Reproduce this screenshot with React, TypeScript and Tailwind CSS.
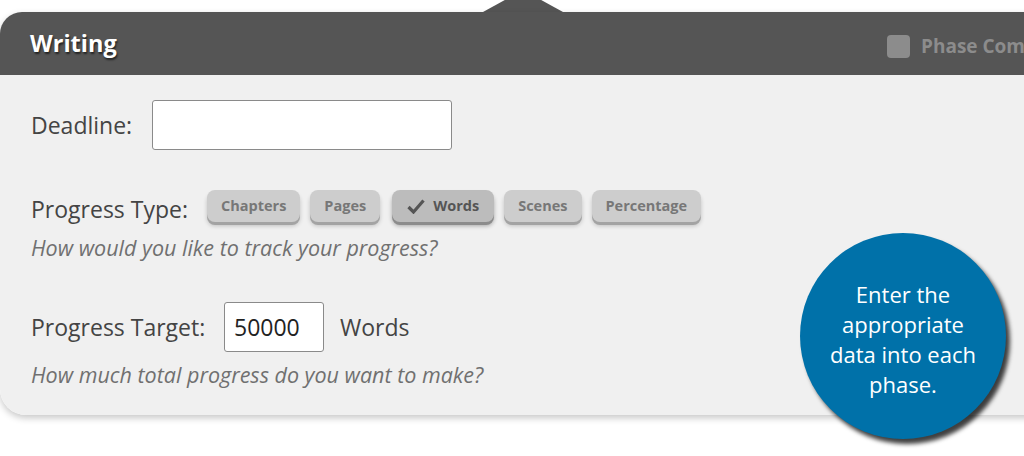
import React from "react";

const btns = ["Chapters", "Pages", "Words", "Scenes", "Percentage"];

export default function App() {
  return (
    <div className="relative w-[1024px] h-[456px] bg-white overflow-hidden" style={{ fontFamily: '"Open Sans", "Noto Sans", sans-serif' }}>
      {/* notch */}
      <div className="absolute left-[483px] top-[-10px] w-0 h-0 border-l-[40px] border-r-[40px] border-b-[22px] border-l-transparent border-r-transparent border-b-[#555555]" />
      <div className="absolute left-0 top-[12px] w-[1060px] rounded-tl-[22px] rounded-bl-[26px] shadow-[0_3px_7px_rgba(0,0,0,0.22)] overflow-hidden">
        <div className="h-[63px] bg-[#555555] flex items-center pl-[30px]">
          <div className="w-[857px] shrink-0 text-white font-bold text-[23.5px] [text-shadow:1px_2px_2px_rgba(0,0,0,0.6)]">Writing</div>
          <div className="flex items-center gap-[11px] shrink-0 whitespace-nowrap mt-[6px]">
            <div className="w-[23px] h-[23px] rounded-[4px] bg-[#8c8c8c]" />
            <div className="text-[#8c8c8c] font-bold text-[19px]">Phase Complete</div>
          </div>
        </div>
        <div className="bg-[#f0f0f0] pl-[31px] pt-[25px] pb-[26px] text-[#444] text-[23px]">
          <div className="flex items-center h-[50px]">
            <span className="w-[121px]">Deadline:</span>
            <div className="w-[300px] h-[50px] bg-white border border-[#8a8a8a] rounded-[3px]" />
          </div>
          <div className="flex items-center mt-[40px] h-[35px]">
            <span className="w-[176px] pt-[4px]">Progress Type:</span>
            <div className="flex gap-[10px] mb-[3px]">
              {btns.map((b) => {
                const on = b === "Words";
                return (
                  <div
                    key={b}
                    className={
                      "h-[32px] rounded-[8px] flex items-center gap-[8px] text-[14.5px] font-bold whitespace-nowrap " +
                      (on
                        ? "px-[15px] ml-[2px] bg-[#bcbcbc] text-[#555] shadow-[0_3px_0_#8c8c8c,0_4px_4px_rgba(0,0,0,0.3)]"
                        : "px-[14px] bg-[#cdcdcd] text-[#777] shadow-[0_3px_0_#a3a3a3,0_4px_4px_rgba(0,0,0,0.2)]")
                    }
                  >
                    {on && (
                      <svg width="18" height="15" viewBox="0 0 18 15">
                        <path d="M1.5 8 L6.5 13 L16.5 1.5" fill="none" stroke="#555" strokeWidth="3.2" strokeLinejoin="miter" />
                      </svg>
                    )}
                    {b}
                  </div>
                );
              })}
            </div>
          </div>
          <div className="italic text-[#707070] text-[21.5px] leading-[28px] mt-[9px]">How would you like to track your progress?</div>
          <div className="flex items-center mt-[40px] h-[50px]">
            <span className="w-[193px]">Progress Target:</span>
            <div className="w-[100px] h-[50px] bg-white border border-[#8a8a8a] rounded-[3px] flex items-center pl-[9px] text-[#222]">50000</div>
            <span className="ml-[16px]">Words</span>
          </div>
          <div className="italic text-[#707070] text-[21.5px] leading-[28px] mt-[9px]">How much total progress do you want to make?</div>
        </div>
      </div>
      <div className="absolute left-[800px] top-[233px] w-[206px] h-[206px] rounded-full bg-[#0071a9] shadow-[4px_5px_4px_rgba(0,0,0,0.75)] flex flex-col items-center justify-center pt-[6px] text-white text-[22px] leading-[30px] text-center" style={{ fontFamily: '"Open Sans", sans-serif' }}>
        <div>Enter the</div>
        <div>appropriate</div>
        <div>data into each</div>
        <div>phase.</div>
      </div>
    </div>
  );
}
